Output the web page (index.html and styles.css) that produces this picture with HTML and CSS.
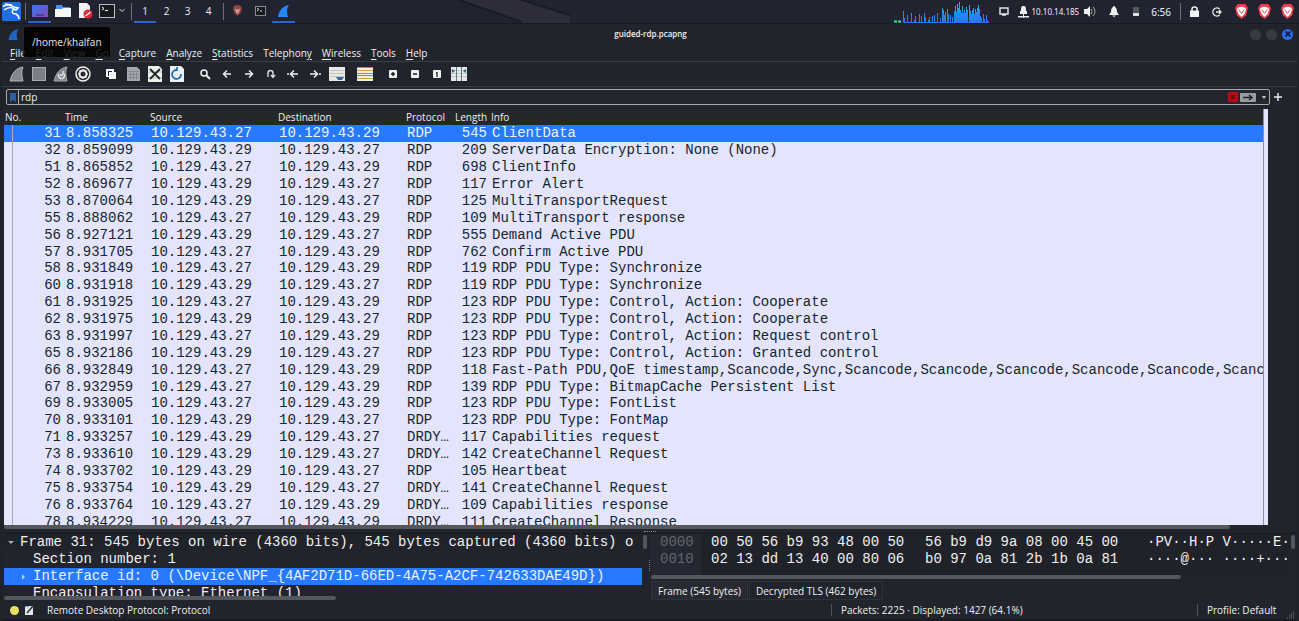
FILE: index.html
```html
<!DOCTYPE html>
<html lang="en">
<head>
<meta charset="utf-8">
<title>guided-rdp.pcapng</title>
<link rel="stylesheet" href="styles.css">
</head>
<body>
<div class="desktop">
<header class="panel">
  <svg class="panel-art" viewBox="0 0 140 24"><path d="M0 0H62L116 15V24H66Z" fill="#2e2e3a"/><path d="M0 0L66 23M66 0L116 16" stroke="#191a26" stroke-width="2" fill="none"/></svg>
  <div class="panel-left">
    <svg class="kali" viewBox="0 0 19 19"><rect width="19" height="19" rx="2" fill="#1d6ee6"/><path d="M1 4.500C5 2 9 3 12 5M2 8C6 5 10 5 12 7C9 9 10 12 14 12C16 13 17 15 17 17M12 5L16 6L14 8L12 7M3 2L10 3" stroke="#fff" stroke-width="1.500" fill="none"/></svg>
    <span class="sep"></span>
    <button class="task active" aria-label="Desktop"><svg width="16" height="12" viewBox="0 0 16 12"><defs><linearGradient id="dg" x2="1" y2="1"><stop stop-color="#3476ed"/><stop offset="1" stop-color="#8849b5"/></linearGradient></defs><rect width="16" height="12" fill="url(#dg)"/><path d="M4 10h8" stroke="#203077"/></svg></button>
    <button class="task" aria-label="Files"><svg width="16" height="14" viewBox="0 0 16 14"><path d="M1 1h6l1 2h7v4H1z" fill="#4b8df5"/><path d="M0 5h7l1-1h8v9H0z" fill="#f5f7fb"/></svg></button>
    <button class="task" aria-label="Text editor"><svg width="15" height="16" viewBox="0 0 15 16"><path d="M1 0h8l3 3v12H1z" fill="#f5f4f5"/><circle cx="10" cy="11" r="4.5" fill="#d82c3b"/><path d="M7.500 13L12.500 9" stroke="#fff" stroke-width="1.500"/></svg></button>
    <button class="task term" aria-label="Terminal"><svg width="16" height="14" viewBox="0 0 16 14"><rect x=".5" y=".5" width="15" height="13" fill="#17191e" stroke="#bcbcbc"/><path d="M3 3l2 1.500L3 6M6 6.500h3" stroke="#fff" fill="none"/></svg></button>
    <button class="task more" aria-label="More terminals"><svg width="6" height="5" viewBox="0 0 6 5"><path d="M.5 1L3 3.500L5.500 1" stroke="#ddd" fill="none"/></svg></button>
    <span class="sep"></span>
    <button class="task ws active">1</button><button class="task ws">2</button><button class="task ws">3</button><button class="task ws">4</button>
    <span class="sep"></span>
    <button class="task win" aria-label="Brave"><svg width="9" height="11" viewBox="0 0 14 16"><path d="M3 0h8l3 4-2 8-5 4-5-4-2-8z" fill="#934746"/><path d="M3 5l4 2 4-2-2 6-2 2-2-2z" fill="#d49c97"/></svg></button>
    <button class="task win" aria-label="Terminal window"><svg width="11" height="10" viewBox="0 0 11 10"><rect x=".5" y=".5" width="10" height="9" fill="#17191e" stroke="#87888c"/><path d="M2 2l2 1.500L2 5M5 5h2" stroke="#ddd" fill="none"/></svg></button>
    <button class="task win active" aria-label="Wireshark"><svg width="11" height="12" viewBox="0 0 11 12"><path d="M0 12C1 5 5 1 11 0C8 4 9 8 10 12Z" fill="#2686f5"/></svg></button>
  </div>
  <div class="panel-right">
    <svg class="graph" viewBox="0 0 96 22"><defs><linearGradient id="gg" gradientUnits="userSpaceOnUse" x1="0" y1="0" x2="0" y2="22"><stop stop-color="#16d5d0"/><stop offset=".6" stop-color="#1d8cf0"/><stop offset="1" stop-color="#2478ff"/></linearGradient></defs><path d="M0 20.500h3M4 20.500h3" stroke="#28e8a2" stroke-width="2"/><path d="M9.500 22V10M10.500 22V17M13.500 22V14M17.500 22V12M20.500 22V19M21.500 22V15M25.500 22V13M27.500 22V15M30.500 22V12M31.500 22V16M34.500 22V19M35.500 22V16M38.500 22V15M40.500 22V14M43.500 22V12M46.500 22V17M48.500 22V7M49.500 22V9M50.500 22V14M51.500 22V11M53.500 22V8M54.500 22V13M56.500 22V14M58.500 22V16M60.500 22V10M61.500 22V5M62.500 22V11M63.500 22V3M64.500 22V7M65.500 22V1M66.500 22V9M67.500 22V12M68.500 22V5M69.500 22V12M70.500 22V9M71.500 22V12M72.500 22V6M73.500 22V9M75.500 22V4M76.500 22V10M77.500 22V13M78.500 22V9M79.500 22V7M80.500 22V13M81.500 22V8M82.500 22V11M83.500 22V7M84.500 22V4M85.500 22V8M86.500 22V15M87.500 22V17M89.500 22V13M90.500 22V18M92.500 22V14M93.500 22V19" stroke="url(#gg)"/><path d="M9 21.500H95" stroke="#2478ff"/></svg>
    <svg width="10" height="9" viewBox="0 0 10 9"><path d="M1 1h8v6H1zM3 8h4" stroke="#e2e2e2" stroke-width="1.500" fill="none"/></svg>
    <span class="vpn"><svg width="11" height="12" viewBox="0 0 11 12"><path d="M5.500 0C3 0 3 2 3 5h5c0-3 0-5-2.500-5zM2 5h7v3H2zM0 10h11v1.500H0zM5 7h1v5H5z" fill="#eee"/></svg><span>10.10.14.185</span></span>
    <svg width="12" height="11" viewBox="0 0 12 11"><path d="M0 3h3l3-3v11L3 8H0z" fill="#f0f0f0"/><path d="M7 3q2 2.500 0 5M9 1q4 4.500 0 9" stroke="#aaa" fill="none"/></svg>
    <svg width="10" height="11" viewBox="0 0 10 11"><path d="M5 0Q6 0 6 1Q8 2 8 6L10 9H0L2 6Q2 2 4 1Q4 0 5 0zM3 9.500h4L5 11z" fill="#f0f0f0"/></svg>
    <svg width="8" height="10" viewBox="0 0 8 10"><path d="M1 0h6v6H1z" fill="#555661"/><path d="M1 6h6v3H1z" fill="#ddd"/></svg>
    <time>6:56</time>
    <span class="sep"></span>
    <svg width="9" height="11" viewBox="0 0 9 11"><path d="M2 5V3q0-2 2.500-2T7 3v2" stroke="#f2f2f2" stroke-width="1.500" fill="none"/><path d="M0 4.500h9V11H0z" fill="#f2f2f2"/></svg>
    <svg width="10" height="10" viewBox="0 0 10 10"><path d="M7.500 2A4 4 0 1 0 7.500 8M4 5h5M7 3l2 2-2 2" stroke="#e5e5e5" stroke-width="1.400" fill="none"/></svg>
    <svg class="brave" viewBox="0 0 14 16"><path d="M3 0h8l3 4-2 8-5 4-5-4-2-8z" fill="#ef3d4b"/><path d="M3 4l3-1h2l3 1 1 2-2 5-3 3-3-3-2-5z" fill="#fff"/><path d="M4 6l3 4 3-4" stroke="#ef3d4b" fill="none"/></svg>
    <svg class="brave" viewBox="0 0 14 16"><path d="M3 0h8l3 4-2 8-5 4-5-4-2-8z" fill="#ef3d4b"/><path d="M3 4l3-1h2l3 1 1 2-2 5-3 3-3-3-2-5z" fill="#fff"/><path d="M4 6l3 4 3-4" stroke="#ef3d4b" fill="none"/></svg>
    <svg class="brave" viewBox="0 0 14 16"><path d="M3 0h8l3 4-2 8-5 4-5-4-2-8z" fill="#ef3d4b"/><path d="M3 4l3-1h2l3 1 1 2-2 5-3 3-3-3-2-5z" fill="#fff"/><path d="M4 6l3 4 3-4" stroke="#ef3d4b" fill="none"/></svg>
  </div>
</header>
<main class="window">
  <div class="titlebar">
    <svg width="11" height="11" viewBox="0 0 11 12"><path d="M0 12C1 5 5 1 11 0C8 4 9 8 10 12Z" fill="#1d66c4"/></svg>
    <h1>guided-rdp.pcapng</h1>
    <div class="win-buttons"><button aria-label="Minimize"></button><button aria-label="Maximize"></button><button class="close" aria-label="Close"><svg width="6" height="6" viewBox="0 0 6 6"><path d="M.5 .5l5 5M5.500 .5l-5 5" stroke="#0b1c42" stroke-width="1.800"/></svg></button></div>
  </div>
  <nav class="menubar">
    <button><u>F</u>ile</button><button><u>E</u>dit</button><button><u>V</u>iew</button><button><u>G</u>o</button><button><u>C</u>apture</button><button><u>A</u>nalyze</button><button><u>S</u>tatistics</button><button>Telephon<u>y</u></button><button><u>W</u>ireless</button><button><u>T</u>ools</button><button><u>H</u>elp</button>
  </nav>
  <div class="toolbar">
    <button aria-label="Start capture"><svg viewBox="0 0 16 16"><path d="M1 15C3 7 7 2 14 1C12 6 13 10 14 15Z" fill="#85878c" stroke="#b5b7ba"/></svg></button>
    <button aria-label="Stop capture"><svg viewBox="0 0 16 16"><rect x="1.500" y="1.500" width="13" height="13" fill="#7c7e84" stroke="#a9abae"/></svg></button>
    <button aria-label="Restart capture"><svg viewBox="0 0 16 16"><path d="M1 15C3 7 7 2 14 1C12 6 13 10 14 15Z" fill="#85878c" stroke="#a5a7aa"/><path d="M6 8a3 3 0 1 0 4-1V5M10 9H7" stroke="#e3e3e3" stroke-width="1.500" fill="none"/></svg></button>
    <button aria-label="Capture options"><svg viewBox="0 0 16 16"><circle cx="8" cy="8" r="7" fill="#26282d" stroke="#eee" stroke-width="1.500"/><circle cx="8" cy="8" r="3.500" fill="none" stroke="#eee" stroke-width="2"/><path d="M8 3v2M8 11v2M3 8h2M11 8h2M4.500 4.500l1.500 1.500M10 10l1.500 1.500M11.500 4.500L10 6M6 10l-1.500 1.500" stroke="#eee" stroke-width="1.200"/></svg></button>
    <button class="group" aria-label="Open"><svg viewBox="0 0 16 16"><path d="M3 3h8v3h2v7H6v-2H3z" fill="#f5f5f5"/><path d="M5 5h4v1H6v4H5z" fill="#22232c"/></svg></button>
    <button aria-label="Save"><svg viewBox="0 0 16 16"><path d="M2 1h10l3 3v11H2z" fill="#a5a8ac"/><path d="M3 5.500h11M3 8.500h11M3 11.500h11M5.500 5v9M8.500 5v9M11.500 5v9" stroke="#85888c"/></svg></button>
    <button aria-label="Close file"><svg viewBox="0 0 16 16"><path d="M1 0h11l3 3v13H1z" fill="#edf0e7"/><path d="M1 6h14M1 12h14" stroke="#9fc7d5"/><path d="M3 3l10 10M13 3L3 13" stroke="#20252a" stroke-width="1.800"/></svg></button>
    <button aria-label="Reload"><svg viewBox="0 0 16 16"><path d="M1 0h11l3 3v13H1z" fill="#edf0f2"/><path d="M4 5L8 4V1M8 4A4.500 4.500 0 1 0 12 8" stroke="#246fb8" stroke-width="1.800" fill="none"/></svg></button>
    <button class="group" aria-label="Find"><svg viewBox="0 0 16 16"><circle cx="7" cy="7" r="3" fill="none" stroke="#eee" stroke-width="1.500"/><path d="M9 9l4 4" stroke="#eee" stroke-width="2"/></svg></button>
    <button aria-label="Previous packet"><svg viewBox="0 0 16 16"><path d="M12 8H5M8 4.500L4.500 8L8 11.500" stroke="#eee" stroke-width="1.500" fill="none"/></svg></button>
    <button aria-label="Next packet"><svg viewBox="0 0 16 16"><path d="M4 8h7M8 4.500L11.500 8L8 11.500" stroke="#eee" stroke-width="1.500" fill="none"/></svg></button>
    <button aria-label="Go to packet"><svg viewBox="0 0 16 16"><path d="M5 11V7a2.500 2.500 0 0 1 5 0v4M8 9l2 2.500L12 9" stroke="#ddd" stroke-width="1.400" fill="none"/></svg></button>
    <button aria-label="First packet"><svg viewBox="0 0 16 16"><path d="M13 8H6M9 4.500L5.500 8L9 11.500M2 8h2" stroke="#eee" stroke-width="1.500" fill="none"/></svg></button>
    <button aria-label="Last packet"><svg viewBox="0 0 16 16"><path d="M3 8h7M7 4.500L10.500 8L7 11.500M12 8h2" stroke="#eee" stroke-width="1.500" fill="none"/></svg></button>
    <button aria-label="Auto scroll"><svg viewBox="0 0 16 16"><path d="M0 1h16v14H0z" fill="#e9e9e4"/><path d="M1 4.500h14M1 7.500h14M1 10.500h14" stroke="#c5c6bf"/><path d="M7 11h8l-2 3H9z" fill="#3465a4"/></svg></button>
    <button class="group" aria-label="Colorize"><svg viewBox="0 0 16 16"><path d="M0 1h16v14H0z" fill="#f1eee5"/><path d="M0 1.500h16" stroke="#d37a67"/><path d="M0 4.500h16" stroke="#d6a347"/><path d="M0 7.500h16" stroke="#78a94e"/><path d="M0 9.500h16" stroke="#648fca"/><path d="M0 12.500h16" stroke="#c6a43f"/></svg></button>
    <button class="group" aria-label="Zoom in"><svg viewBox="0 0 16 16"><rect x="4" y="4" width="8" height="8" rx="1" fill="#f1f1f1"/><path d="M6 8h4M8 6v4" stroke="#15171c" stroke-width="1.400"/></svg></button>
    <button aria-label="Zoom out"><svg viewBox="0 0 16 16"><rect x="4" y="4" width="8" height="8" rx="1" fill="#f1f1f1"/><path d="M6 8h4" stroke="#15171c" stroke-width="1.500"/></svg></button>
    <button aria-label="Normal size"><svg viewBox="0 0 16 16"><rect x="4" y="4" width="8" height="8" rx="1" fill="#f1f1f1"/><path d="M7 6.500h1V11" stroke="#15171c" stroke-width="1.200" fill="none"/></svg></button>
    <button aria-label="Resize columns"><svg viewBox="0 0 16 16"><path d="M0 1h16v14H0z" fill="#e4e8e7"/><path d="M0 4.500h16M0 7.500h16M0 10.500h16" stroke="#c2c9ca"/><path d="M5.500 1v14M10.500 1v14" stroke="#66757b"/><path d="M1 3l3 2-3 2zM15 3l-3 2 3 2z" fill="#345f91"/></svg></button>
  </div>
  <div class="filter-row">
    <div class="filter">
      <button class="bookmark" aria-label="Bookmarks"><svg width="6" height="9" viewBox="0 0 6 9"><path d="M0 0h6v9L3 7L0 9z" fill="#2f5f9e"/></svg></button>
      <input type="text" value="rdp" aria-label="Display filter">
      <button aria-label="Clear"><svg width="10" height="10" viewBox="0 0 10 10"><rect width="10" height="10" rx="1" fill="#b80d12"/><path d="M3 3l4 4M7 3L3 7" stroke="#6b0508" stroke-width="1.500"/></svg></button>
      <button aria-label="Apply"><svg width="16" height="9" viewBox="0 0 16 9"><rect width="16" height="9" rx="1" fill="#9a9ca0"/><path d="M3 4.500h9M9 2l3 2.500L9 7" stroke="#202128" stroke-width="1.500" fill="none"/></svg></button>
      <button class="drop" aria-label="History"><svg width="4" height="3" viewBox="0 0 4 3"><path d="M0 0h4L2 3z" fill="#ccc"/></svg></button>
    </div>
    <button aria-label="Add filter button"><svg width="8" height="8" viewBox="0 0 8 8"><path d="M0 4h8M4 0v8" stroke="#eee" stroke-width="1.400"/></svg></button>
  </div>
  <section class="packets">
    <div class="packet-list">
    <table>
      <colgroup><col class="c-no"><col class="c-time"><col class="c-addr"><col class="c-addr"><col class="c-proto"><col class="c-len"><col></colgroup>
      <thead><tr><th>No.</th><th>Time</th><th>Source</th><th>Destination</th><th>Protocol</th><th>Length</th><th>Info</th></tr></thead>
      <tbody>
      <tr class="selected"><td>31</td><td>8.858325</td><td>10.129.43.27</td><td>10.129.43.29</td><td>RDP</td><td>545</td><td>ClientData</td></tr>
      <tr><td>32</td><td>8.859099</td><td>10.129.43.29</td><td>10.129.43.27</td><td>RDP</td><td>209</td><td>ServerData Encryption: None (None)</td></tr>
      <tr><td>51</td><td>8.865852</td><td>10.129.43.27</td><td>10.129.43.29</td><td>RDP</td><td>698</td><td>ClientInfo</td></tr>
      <tr><td>52</td><td>8.869677</td><td>10.129.43.29</td><td>10.129.43.27</td><td>RDP</td><td>117</td><td>Error Alert</td></tr>
      <tr><td>53</td><td>8.870064</td><td>10.129.43.29</td><td>10.129.43.27</td><td>RDP</td><td>125</td><td>MultiTransportRequest</td></tr>
      <tr><td>55</td><td>8.888062</td><td>10.129.43.27</td><td>10.129.43.29</td><td>RDP</td><td>109</td><td>MultiTransport response</td></tr>
      <tr><td>56</td><td>8.927121</td><td>10.129.43.29</td><td>10.129.43.27</td><td>RDP</td><td>555</td><td>Demand Active PDU</td></tr>
      <tr><td>57</td><td>8.931705</td><td>10.129.43.27</td><td>10.129.43.29</td><td>RDP</td><td>762</td><td>Confirm Active PDU</td></tr>
      <tr><td>58</td><td>8.931849</td><td>10.129.43.27</td><td>10.129.43.29</td><td>RDP</td><td>119</td><td>RDP PDU Type: Synchronize</td></tr>
      <tr><td>60</td><td>8.931918</td><td>10.129.43.29</td><td>10.129.43.27</td><td>RDP</td><td>119</td><td>RDP PDU Type: Synchronize</td></tr>
      <tr><td>61</td><td>8.931925</td><td>10.129.43.27</td><td>10.129.43.29</td><td>RDP</td><td>123</td><td>RDP PDU Type: Control, Action: Cooperate</td></tr>
      <tr><td>62</td><td>8.931975</td><td>10.129.43.29</td><td>10.129.43.27</td><td>RDP</td><td>123</td><td>RDP PDU Type: Control, Action: Cooperate</td></tr>
      <tr><td>63</td><td>8.931997</td><td>10.129.43.27</td><td>10.129.43.29</td><td>RDP</td><td>123</td><td>RDP PDU Type: Control, Action: Request control</td></tr>
      <tr><td>65</td><td>8.932186</td><td>10.129.43.29</td><td>10.129.43.27</td><td>RDP</td><td>123</td><td>RDP PDU Type: Control, Action: Granted control</td></tr>
      <tr><td>66</td><td>8.932849</td><td>10.129.43.27</td><td>10.129.43.29</td><td>RDP</td><td>118</td><td>Fast-Path PDU,QoE timestamp,Scancode,Sync,Scancode,Scancode,Scancode,Scancode,Scancode,Scancode,Scancode</td></tr>
      <tr><td>67</td><td>8.932959</td><td>10.129.43.27</td><td>10.129.43.29</td><td>RDP</td><td>139</td><td>RDP PDU Type: BitmapCache Persistent List</td></tr>
      <tr><td>69</td><td>8.933005</td><td>10.129.43.27</td><td>10.129.43.29</td><td>RDP</td><td>123</td><td>RDP PDU Type: FontList</td></tr>
      <tr><td>70</td><td>8.933101</td><td>10.129.43.29</td><td>10.129.43.27</td><td>RDP</td><td>123</td><td>RDP PDU Type: FontMap</td></tr>
      <tr><td>71</td><td>8.933257</td><td>10.129.43.29</td><td>10.129.43.27</td><td>DRDY…</td><td>117</td><td>Capabilities request</td></tr>
      <tr><td>73</td><td>8.933610</td><td>10.129.43.29</td><td>10.129.43.27</td><td>DRDY…</td><td>142</td><td>CreateChannel Request</td></tr>
      <tr><td>74</td><td>8.933702</td><td>10.129.43.29</td><td>10.129.43.27</td><td>RDP</td><td>105</td><td>Heartbeat</td></tr>
      <tr><td>75</td><td>8.933754</td><td>10.129.43.29</td><td>10.129.43.27</td><td>DRDY…</td><td>141</td><td>CreateChannel Request</td></tr>
      <tr><td>76</td><td>8.933764</td><td>10.129.43.27</td><td>10.129.43.29</td><td>DRDY…</td><td>109</td><td>Capabilities response</td></tr>
      <tr><td>78</td><td>8.934229</td><td>10.129.43.27</td><td>10.129.43.29</td><td>DRDY…</td><td>111</td><td>CreateChannel Response</td></tr>
      </tbody>
    </table>
    </div>
    <div class="minimap"></div>
  </section>
  <div class="hscroll list-scroll"><span class="thumb"></span></div>
  <div class="grip"></div>
  <section class="bottom">
    <div class="details">
      <div class="tree">
        <div class="node root"><svg width="6" height="4" viewBox="0 0 6 4"><path d="M0 0h6L3 3z" fill="#aaa"/></svg><span>Frame 31: 545 bytes on wire (4360 bits), 545 bytes captured (4360 bits) o</span></div>
        <div class="node"><span>Section number: 1</span></div>
        <div class="node selected"><svg width="4" height="6" viewBox="0 0 4 6"><path d="M0 0l3 3-3 3z" fill="#aad0ff"/></svg><span>Interface id: 0 (\Device\NPF_{4AF2D71D-66ED-4A75-A2CF-742633DAE49D})</span></div>
        <div class="node"><span>Encapsulation type: Ethernet (1)</span></div>
      </div>
      <div class="hscroll tree-scroll"><span class="thumb"></span></div>
    </div>
    <div class="vsplit"><span class="vthumb"></span><span class="vgrip"></span></div>
    <div class="bytes">
      <div class="hex">
        <span class="offset">0000</span><span>00 50 56 b9 93 48 00 50</span><span>56 b9 d9 9a 08 00 45 00</span><span>·PV··H·P V·····E·</span>
        <span class="offset">0010</span><span>02 13 dd 13 40 00 80 06</span><span>b0 97 0a 81 2b 1b 0a 81</span><span>····@··· ····+···</span>
      </div>
      <div class="hscroll hex-scroll"><span class="thumb"></span></div>
      <div class="tabs"><button class="on">Frame (545 bytes)</button><button>Decrypted TLS (462 bytes)</button></div>
    </div>
    <div class="vsplit"><span class="vthumb"></span></div>
  </section>
  <footer class="status">
    <span class="led"></span>
    <svg width="9" height="10" viewBox="0 0 9 10"><path d="M0 1h8v9H0z" fill="#dfe5e8"/><path d="M2 8L8 1" stroke="#3a4650" stroke-width="1.800"/><path d="M0 1h4v1H0z" fill="#6aa5d8"/></svg>
    <span class="proto">Remote Desktop Protocol: Protocol</span>
    <span class="count">Packets: 2225 · Displayed: 1427 (64.1%)</span>
    <span class="profile">Profile: Default</span>
    <svg class="resize" width="8" height="8" viewBox="0 0 8 8"><path d="M6 1h1M4 3h1M6 3h1M2 5h1M4 5h1M6 5h1M0 7h1M2 7h1M4 7h1M6 7h1" stroke="#777a82"/></svg>
  </footer>
</main>
<div class="tooltip" role="tooltip">/home/khalfan</div>
</div>
</body>
</html>
```
FILE: styles.css
```css
* { box-sizing: border-box; }
body { margin: 0; background: #20222b; color: #f0f0f0; font: 500 10px/14px "Open Sans", "Noto Sans", sans-serif; }
button, input { font: inherit; color: inherit; background: none; border: 0; padding: 0; margin: 0; }
svg { display: block; flex: none; }
.desktop { position: relative; height: 100vh; display: flex; flex-direction: column; overflow: hidden; }

.panel { position: relative; height: 24px; flex: none; background: #222331; border-bottom: 1px solid #181a24; display: flex; justify-content: space-between; }
.panel-art { position: absolute; left: 456px; top: 0; width: 140px; height: 23px; }
.panel-left, .panel-right { display: flex; align-items: center; }
.panel-left { padding-left: 2px; font-weight: 400; }
.kali { width: 19px; height: 19px; }
.sep { width: 1px; height: 17px; background: #6b6c76; flex: none; }
.panel-left .sep { margin: 0 2px 0 4px; }
.task { height: 23px; width: 23px; display: flex; align-items: center; justify-content: center; border-bottom: 2px solid transparent; }
.task.active { border-color: #2c65c8; }
.task.term { width: 19px; }
.task.more { width: 11px; }
.task.ws { width: 22px; }
.task.ws:not(.active) { width: 21px; }
.panel-right { gap: 13px; padding-right: 5px; }
.graph { width: 96px; height: 22px; margin-right: -4px; }
.panel-right .sep { margin: 0 -4px; }
.vpn { display: flex; align-items: center; gap: 3px; font: 400 8px/12px "Noto Sans", sans-serif; margin: 0 -8px 0 -4px; }
.panel-right time { font: 400 10px/14px "Noto Sans", sans-serif; margin-left: -2px; }
.brave { width: 13px; height: 15px; margin-right: -3px; }
.brave:last-child { margin-right: 0; }

.window { flex: 1; min-height: 0; display: flex; flex-direction: column; margin: 0 2px; background: #21242c; }
.titlebar { height: 20px; flex: none; display: grid; grid-template-columns: 50px 1fr 50px; align-items: center; padding: 0 4px 0 6px; }
.titlebar h1 { margin: 0; font-size: 8px; line-height: 12px; font-weight: 600; text-align: center; }
.win-buttons { display: flex; gap: 5px; justify-content: end; }
.win-buttons button { width: 11px; height: 11px; border-radius: 50%; background: #363a43; display: flex; align-items: center; justify-content: center; }
.win-buttons .close { background: #2c6cf0; }
.menubar { display: flex; gap: 10px; padding: 0 8px; height: 17px; flex: none; align-items: center; }
.menubar u { text-underline-offset: 2px; }
.toolbar { height: 26px; flex: none; border-top: 1px solid #3b3c45; border-bottom: 1px solid #3b3c45; display: flex; align-items: center; gap: 6px; padding-left: 7px; }
.toolbar button { width: 16px; height: 16px; }
.toolbar .group { margin-left: 6px; }
.filter-row { flex: none; display: flex; align-items: center; gap: 4px; padding: 2px 15px 4px 4px; }
.filter { flex: 1; display: flex; align-items: center; height: 16px; border: 1px solid #a9aaae; border-radius: 2px; background: #23252f; padding-right: 3px; gap: 2px; }
.bookmark { width: 12px; height: 14px; border-right: 1px solid #a9aaae; display: flex; align-items: center; justify-content: center; }
.filter input { flex: 1; min-width: 0; outline: 0; height: 14px; }
.drop { padding-left: 4px; }

.packets { flex: 1; min-height: 0; display: flex; padding: 0 29px 0 2px; }
.packet-list { position: relative; flex: 1; min-width: 0; overflow: hidden; background: #e5e4fd; }
.packet-list::before { content: ""; position: absolute; left: 8px; top: 16px; bottom: 0; width: 1px; background: #a5a8c5; z-index: 1; }
.minimap { width: 5px; background: #e5e4fd; border-left: 1px solid #8f90a4; }
table { width: 100%; height: calc(100% + 5px); table-layout: fixed; border-collapse: collapse; }
.c-no { width: 58px; } .c-time { width: 85px; } .c-addr { width: 128px; } .c-proto { width: 49px; } .c-len { width: 36px; }
th { height: 16px; padding: 0 0 0 3px; text-align: left; font: 500 10px/14px "Open Sans", "Noto Sans", sans-serif; background: #24272b; color: #f0f0f0; white-space: nowrap; }
th:first-child { padding-left: 1px; }
td { padding: 0 0 0 4px; font: 14px/16px "Liberation Mono", monospace; color: #12272e; white-space: nowrap; overflow: hidden; }
td:first-child, td:nth-child(6) { text-align: right; padding: 0 1px 0 0; }
tr.selected { background: #2779ff; }
tr.selected td { color: #e9f3ff; }

.hscroll { height: 5px; flex: none; }
.thumb { display: block; height: 4px; border-radius: 2px; background: #54575c; }
.list-scroll { padding: 0 29px 0 2px; }
.list-scroll .thumb { width: 97%; }
.grip { height: 4px; flex: none; border-bottom: 1px solid #191b22; }
.grip::before { content: ""; display: block; width: 12px; margin: 0 auto; border-bottom: 1px dotted #888; padding-top: 1px; }
.bottom { height: 67px; flex: none; display: grid; grid-template-columns: 638px 9px 1fr 5px; padding: 0 2px; }
.details { min-width: 0; }
.tree { height: 62px; overflow: hidden; background: #22242e; }
.node { height: 17px; padding-left: 29px; font: 14px/17px "Liberation Mono", monospace; white-space: pre; display: flex; align-items: center; }
.node svg { margin: 0 7px 0 -11px; }
.node.root { padding-left: 15px; background: #21232b; }
.node.root svg { margin: 0 6px 0 -11px; }
.node.selected { background: #2779ff; color: #e9f3ff; }
.tree-scroll .thumb { width: 52%; }
.vsplit { display: flex; flex-direction: column; justify-content: space-between; padding: 1px 0 29px 1px; }
.vthumb { width: 4px; height: 14px; border-radius: 2px; background: #54575c; }
.vgrip { width: 1px; height: 12px; margin-left: 6px; background: repeating-linear-gradient(#777 0 1px, transparent 1px 2px); }
.bytes { min-width: 0; }
.hex { height: 41px; overflow: hidden; display: grid; grid-template-columns: 51px 214px 222px 1fr; grid-auto-rows: 17px; padding-left: 9px; background: linear-gradient(90deg, #252732 50px, #20222a 50px); font: 14px/17px "Liberation Mono", monospace; white-space: pre; }
.offset { color: #62646b; }
.hex-scroll .thumb { width: 83%; }
.tabs { display: flex; gap: 1px; padding-top: 1px; }
.tabs button { height: 19px; padding: 0 6px; border: 1px solid #30323a; }
.tabs button.on { background: #282a33; }
.status { height: 20px; flex: none; display: flex; align-items: center; padding: 0 2px 0 8px; border-bottom: 2px solid #191b22; }
.led { width: 9px; height: 9px; border-radius: 50%; background: #e8df62; margin-right: 6px; }
.proto { flex: 1; margin-left: 13px; }
.count, .profile { border-left: 1px solid #50525a; padding-left: 9px; line-height: 12px; }
.count { width: 366px; }
.profile { width: 90px; white-space: nowrap; }
.resize { align-self: end; margin-left: auto; }
.tooltip { position: absolute; left: 23px; top: 26px; padding: 8px; background: rgba(0, 0, 0, .85); border: 1px solid #25262b; border-radius: 3px; color: #ddd; font-family: "Noto Sans", sans-serif; font-weight: 400; }
```
